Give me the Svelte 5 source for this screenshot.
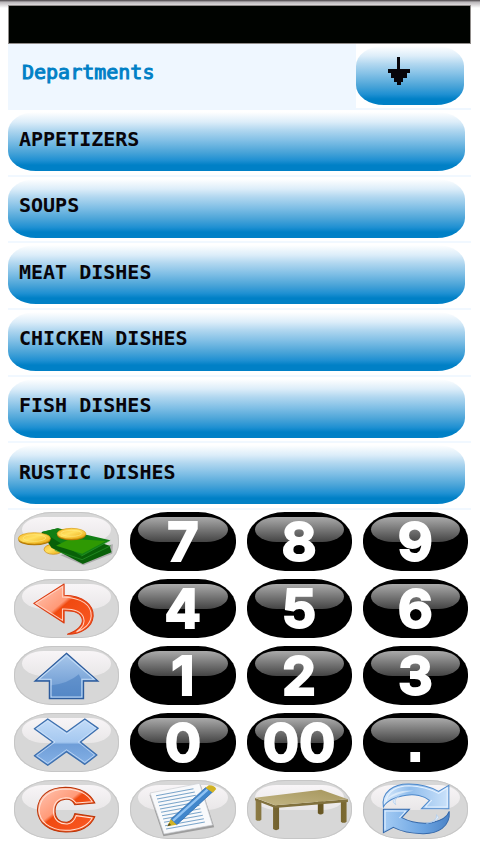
<script>
  const departments = ['APPETIZERS', 'SOUPS', 'MEAT DISHES', 'CHICKEN DISHES', 'FISH DISHES', 'RUSTIC DISHES'];
  const keys = [
    { icon: 'money', label: 'Payment', box: '42 21 315 177' }, '7', '8', '9',
    { icon: 'undo', label: 'Undo', box: '42 222 315 177' }, '4', '5', '6',
    { icon: 'up', label: 'Up', box: '42 18 315 177' }, '1', '2', '3',
    { icon: 'cross', label: 'Delete', box: '42 219 315 177' }, '0', '00', '.',
    { icon: 'clear', label: 'Clear', box: '42 30 315 177' },
    { icon: 'note', label: 'Note', box: '390 30 315 177' },
    { icon: 'table', label: 'Table', box: '18 30 315 177' },
    { icon: 'refresh', label: 'Refresh', box: '366 30 315 177' }
  ];
</script>

<svg class="defs" width="0" height="0" aria-hidden="true">
  <defs>
    <linearGradient id="red" x1="0" y1="0" x2="1" y2="1"><stop offset="0" stop-color="#ffc9b8" /><stop offset=".42" stop-color="#ff9a78" /><stop offset=".47" stop-color="#f04a10" /><stop offset="1" stop-color="#fb5a26" /></linearGradient>
    <linearGradient id="blue" x1="0" y1="0" x2="0" y2="1"><stop offset="0" stop-color="#a9c8ec" /><stop offset="1" stop-color="#5f90cc" /></linearGradient>
    <linearGradient id="sky" x1="0" y1="0" x2="0" y2="1"><stop offset="0" stop-color="#c3dcf8" /><stop offset=".5" stop-color="#a5c8f0" /><stop offset=".55" stop-color="#6f9ed8" /><stop offset="1" stop-color="#85b1e6" /></linearGradient>
    <linearGradient id="gold" x1="0" y1="0" x2="1" y2="1"><stop offset="0" stop-color="#f8b92c" /><stop offset=".45" stop-color="#ffe060" /><stop offset="1" stop-color="#e8a208" /></linearGradient>
    <linearGradient id="wood" x1="0" y1="0" x2="1" y2="0"><stop offset="0" stop-color="#8c7b45" /><stop offset=".5" stop-color="#584818" /><stop offset="1" stop-color="#7d6b33" /></linearGradient>
    <linearGradient id="top" x1="0" y1="1" x2="1" y2="0"><stop offset="0" stop-color="#c3b685" /><stop offset="1" stop-color="#a5955c" /></linearGradient>
    <linearGradient id="arcA" x1="0" y1="0" x2="1" y2="0"><stop offset="0" stop-color="#dcecfc" /><stop offset=".4" stop-color="#8fbcec" /><stop offset="1" stop-color="#cbe2fa" /></linearGradient>
    <linearGradient id="arcB" x1="0" y1="0" x2="1" y2="0"><stop offset="0" stop-color="#a5ccf4" /><stop offset=".6" stop-color="#6ba4e2" /><stop offset="1" stop-color="#4c83c6" /></linearGradient>
  </defs>
</svg>

<main>
  <div class="display"></div>
  <header>
    <h1>Departments</h1>
    <div class="next">
      <button class="bar" aria-label="Next departments">
        <svg viewBox="348 138 327 177" preserveAspectRatio="none" shape-rendering="crispEdges">
          <path fill="#08050a" d="M472 172H482V207H510V219H501V234H491V245H483V254H471V245H463V234H454V219H444V207H472Z" />
        </svg>
      </button>
    </div>
  </header>

  <ul>
    {#each departments as name}
      <li><button class="bar">{name}</button></li>
    {/each}
  </ul>

  <section class="pad">
    {#each keys as key}
      {#if typeof key === 'string'}
        <button class="key digit" class:point={key === '.'}><span>{key}</span></button>
      {:else}
        <button class="key tool" aria-label={key.label}>
          <svg viewBox={key.box} preserveAspectRatio="none">
            {#if key.icon === 'money'}
              <path fill="#0003" d="M180 150L250 181L336 146L338 118Z" />
              <ellipse cx="160" cy="133" rx="28" ry="15" fill="url(#gold)" stroke="#cc8a08" stroke-width="2" />
              <path fill="#086008" d="M124 82L172 70L328 122L334 142L248 177L154 128Z" />
              <path fill="#117f14" d="M126 80L174 70L330 106L244 153Z" />
              <path fill="#2f9903" d="M168 122L210 101L318 108L246 146Z" />
              <path fill="none" stroke="#2c9a2c" stroke-width="2" d="M164 136L246 164L332 122M244 153L330 106" />
              <ellipse cx="103" cy="104" rx="48" ry="17" fill="#b17604" />
              <ellipse cx="103" cy="100" rx="48" ry="17" fill="url(#gold)" stroke="#d89b12" stroke-width="2" />
              <ellipse cx="103" cy="99" rx="34" ry="10" fill="none" stroke="#ffea80" stroke-width="2" />
              <ellipse cx="214" cy="90" rx="43" ry="16" fill="#b17604" />
              <ellipse cx="214" cy="86" rx="43" ry="16" fill="url(#gold)" stroke="#d89b12" stroke-width="2" />
              <ellipse cx="214" cy="85" rx="31" ry="9" fill="none" stroke="#ffea80" stroke-width="2" />
            {:else if key.icon === 'undo'}
              <path fill="url(#red)" stroke="#d83a10" stroke-width="3" stroke-linejoin="round" d="M101 295L192 237V271C250 273 280 298 279 333C277 365 245 388 202 388C233 377 250 359 246 342C242 324 222 316 192 317V354Z" />
              <path fill="none" stroke="#ffd2c2" stroke-width="3" d="M108 295L187 245V276C245 278 274 300 273 333C271 357 251 374 229 381C250 366 255 350 250 337C244 320 222 311 187 312V346Z" />
            {:else if key.icon === 'up'}
              <path fill="url(#blue)" stroke="#2d5c9d" stroke-width="4" d="M199 40L293 123H250V176H148V123H105Z" />
              <path fill="none" stroke="#c3dcf6" stroke-width="3" d="M199 47L282 118H245V171H153V118H116Z" />
              <path fill="#4b80c2" opacity=".6" d="M155 136Q205 130 236 103L243 118V169H155Z" />
            {:else if key.icon === 'cross'}
              <path fill="url(#sky)" stroke="#3d6fae" stroke-width="4" stroke-linejoin="round" d="M143 237L200 276L254 237L294 265L241 306L290 345L254 373L199 335L143 376L103 347L158 306L103 266Z" />
              <path fill="none" stroke="#d4e6fb" stroke-width="2" d="M143 243L200 282L254 243L287 265L234 306L283 345L254 367L199 329L143 370L110 347L165 306L110 266Z" />
            {:else if key.icon === 'clear'}
              <path fill="url(#red)" stroke="#b93508" stroke-width="3" d="M284 99L224 104Q215 86 197 88C174 90 164 104 165 126C167 151 184 158 201 157Q218 153 224 131L284 140C272 170 240 187 196 186C145 185 114 158 112 120C114 76 146 53 196 52C240 53 269 69 284 99Z" />
              <path fill="none" stroke="#ffe1d5" stroke-width="3" d="M276 95L228 99Q216 82 197 83C170 84 159 103 160 126C162 153 181 163 202 162Q221 159 228 137L276 144C262 168 235 181 196 181C149 179 118 155 117 120C120 80 151 58 196 57C237 58 262 72 276 95Z" />
            {:else if key.icon === 'note'}
              <path fill="#0004" d="M448 74L602 45L642 172L490 199Z" />
              <path fill="#f8f9fb" stroke="#c9ccd0" stroke-width="2" d="M450 69L598 40L637 165L492 192Z" />
              <path stroke="#7ba5ca" stroke-width="3" d="M468 77L580 56M471 87L584 66M474 97L587 76M477 107L591 86M480 117L594 96M483 127L598 106M486 137L601 116M489 147L604 126M492 157L608 136M495 167L611 146M498 177L614 156" />
              <path fill="#4186cb" stroke="#2665a8" stroke-width="2" d="M512 148L616 53L638 65L530 164Z" />
              <path stroke="#8fc2f3" stroke-width="7" d="M519 152L622 59" />
              <path fill="#d1b224" d="M502 169L512 148L530 164ZM616 53L626 46Q642 45 648 57L638 68Z" />
              <path fill="#554b20" d="M502 169L507 159L513 165Z" />
            {:else if key.icon === 'table'}
              <path fill="url(#wood)" d="M230 94H247V130Q238 137 230 130ZM44 90H61V149Q52 156 44 149ZM299 92H316V155Q307 162 299 155ZM96 108H114V177Q105 184 96 177Z" />
              <path fill="#81713e" d="M42 84L102 106L320 88V96L102 114L42 91Z" />
              <path fill="url(#top)" d="M42 83L240 59L320 88L102 106Z" />
            {:else}
              <path fill="url(#arcA)" stroke="#4d88cb" stroke-width="3" d="M427 111C420 66 458 41 504 42Q555 43 592 64L623 46V116H541L565 91C548 77 520 72 496 76C462 81 436 94 427 111Z" />
              <path fill="url(#arcB)" stroke="#3267ab" stroke-width="3" d="M624 124C628 170 590 192 545 191Q491 190 457 172L427 188V118H505L482 143C510 158 542 162 572 158C600 152 618 142 624 124Z" />
              <path fill="none" stroke="#e6f2ff" stroke-width="3" d="M435 94C440 60 471 47 504 47Q553 49 592 70L618 54V111H553L572 90M432 179V123H494L475 144" />
              <path fill="#fff" opacity=".5" d="M437 88Q462 58 518 62Q467 70 437 88Z" />
              <path fill="#eaf4ff" stroke="#a9c9ec" stroke-width="2" d="M556 160Q590 154 586 134Q606 150 556 160ZM474 80Q456 88 464 104Q444 92 474 80Z" />
            {/if}
          </svg>
        </button>
      {/if}
    {/each}
  </section>
</main>

<style>
  :global(body) { margin: 0; background: #fff; }
  * { box-sizing: border-box; }
  .defs { position: absolute; }
  main {
    padding: 5px 9px 16px 8px;
    background: linear-gradient(#4d484b 0, #777376 1px, #b9b5b8 2px, #fff 8px);
    font-family: "DejaVu Sans Mono", "Liberation Mono", monospace;
  }
  button { appearance: none; border: 0; padding: 0; margin: 0; font: inherit; cursor: pointer; }
  .display { height: 39px; background: #000300; border: 1px solid #918d8b; }
  header { display: flex; height: 66px; background: #eff7ff; }
  h1 {
    flex: 1;
    margin: 0;
    padding: 14px 0 0 14px;
    font-size: 20px;
    line-height: 28px;
    font-weight: 400;
    color: #0080c6;
    -webkit-text-stroke: 1px #0080c6;
  }
  .next { width: 115px; height: 64px; padding: 2px 7px 0 0; background: #fff; }
  .bar {
    display: block;
    width: 100%;
    height: 59px;
    border-radius: 28px / 20px;
    background: linear-gradient(#fff 0, #dcedf9 17%, #b3d8f0 30%, #82c0e6 48%, #4aa4d8 68%, #1f90d2 82%, #0080c6 90%);
  }
  .bar svg { display: block; width: 100%; height: 100%; }
  ul {
    display: grid;
    grid-template-rows: repeat(6, 1fr);
    height: 400px;
    margin: 0;
    padding: 0;
    list-style: none;
  }
  li { padding: 2px 6px 0 0; border-bottom: 2px solid #f1f8ff; }
  li .bar {
    padding: 0 0 6px 11px;
    text-align: left;
    font-size: 20px;
    line-height: 28px;
    font-weight: 700;
    color: #08050a;
  }
  .pad {
    display: grid;
    grid-template-columns: repeat(4, 1fr);
    gap: 8px 11px;
    margin: 2px 3px 0 6px;
  }
  .key {
    position: relative;
    height: 59px;
    border-radius: 38px / 28px;
  }
  .key::before {
    content: "";
    position: absolute;
    inset: 5px 8px 29px;
    border-radius: 24px / 14px;
  }
  .digit {
    background: #000;
    color: #fff;
    font-family: Inter, "Liberation Sans", sans-serif;
    font-size: 54px;
    line-height: 59px;
    font-weight: 700;
    -webkit-text-stroke: 2px #fff;
  }
  .point { font-family: "Liberation Sans", Arial, sans-serif; }
  .digit::before { background: linear-gradient(#aaa, #444); }
  .digit span { position: relative; display: block; }
  .tool { background: #d7d7d7; box-shadow: inset 0 0 0 1px #c6c6c6; }
  .tool::before { background: linear-gradient(#f8f5f7, #e9e7e8); }
  .tool svg { position: relative; display: block; width: 100%; height: 100%; }
</style>
